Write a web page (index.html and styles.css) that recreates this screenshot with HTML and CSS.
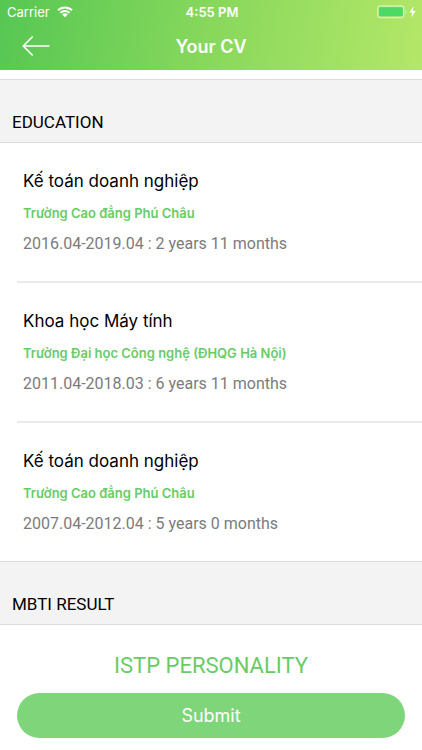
FILE: index.html
```html
<!DOCTYPE html>
<html lang="vi">
<head>
<meta charset="utf-8">
<meta name="viewport" content="width=device-width, initial-scale=1">
<title>Your CV</title>
<link rel="stylesheet" href="styles.css">
</head>
<body>
<header class="top">
  <div class="status">
    <div class="carrier">
      <span>Carrier</span>
      <svg class="wifi" viewBox="0 0 16 12" aria-hidden="true">
        <path d="M1 4.3a10 10 0 0 1 14 0M3.4 6.9a6.5 6.5 0 0 1 9.2 0" fill="none" stroke="currentColor" stroke-width="2"/>
        <path d="M8 11.3 5.2 8.6a4 4 0 0 1 5.6 0z" fill="currentColor"/>
      </svg>
    </div>
    <time class="clock">4:55 PM</time>
    <svg class="battery" viewBox="0 0 40 14" aria-hidden="true">
      <rect x=".75" y="1" width="26" height="11.5" rx="2.5" fill="none" stroke="#fff" stroke-opacity=".5" stroke-width="1.3"/>
      <rect x="2" y="2.3" width="23.8" height="9" rx="1.2" fill="#4cd964"/>
      <path d="M28.3 5v3.8q1.2-.6 1.2-1.9T28.3 5z" fill="#fff" fill-opacity=".5"/>
      <path d="M36.7 1.3 32.4 7.5h2.8l-1 4.8 4.6-6.4h-3z" fill="#fff"/>
    </svg>
  </div>
  <div class="nav">
    <button class="back" type="button" aria-label="Back">
      <svg viewBox="0 0 28 20" aria-hidden="true">
        <path d="M10.2 1 1.2 10l9 9M1.2 10h25.6" fill="none" stroke="currentColor" stroke-width="1.7" stroke-linecap="round" stroke-linejoin="round"/>
      </svg>
    </button>
    <h1 class="title">Your CV</h1>
  </div>
</header>
<main class="content">
  <h2 class="section">EDUCATION</h2>
  <ul class="list">
    <li class="entry">
      <h3 class="major">Kế toán doanh nghiệp</h3>
      <p class="school">Trường Cao đẳng Phú Châu</p>
      <p class="period">2016.04-2019.04 : 2 years 11 months</p>
    </li>
    <li class="entry">
      <h3 class="major">Khoa học Máy tính</h3>
      <p class="school">Trường Đại học Công nghệ (ĐHQG Hà Nội)</p>
      <p class="period">2011.04-2018.03 : 6 years 11 months</p>
    </li>
    <li class="entry">
      <h3 class="major">Kế toán doanh nghiệp</h3>
      <p class="school">Trường Cao đẳng Phú Châu</p>
      <p class="period">2007.04-2012.04 : 5 years 0 months</p>
    </li>
  </ul>
  <h2 class="section">MBTI RESULT</h2>
  <div class="result">
    <p class="personality">ISTP PERSONALITY</p>
    <button class="submit" type="button">Submit</button>
  </div>
</main>
</body>
</html>
```
FILE: styles.css
```css
* {
  box-sizing: border-box;
  margin: 0;
  padding: 0;
}

body {
  background: #fff;
  color: #000;
  font-family: Inter, "Liberation Sans", sans-serif;
}

button {
  border: 0;
  font: inherit;
}

.top {
  height: 70px;
  background: linear-gradient(100deg, #56c753, #88d85c 50%, #b4e768);
  color: #fff;
}

.status {
  display: grid;
  grid-template-columns: 1fr auto 1fr;
  align-items: center;
  height: 24px;
  padding: 0 5px 0 7px;
  font-size: 13px;
}

.carrier {
  display: flex;
  align-items: center;
  gap: 7px;
}

.wifi {
  width: 16px;
  height: 12px;
}

.clock {
  font-weight: 600;
}

.battery {
  width: 40px;
  height: 14px;
  justify-self: end;
}

.nav {
  display: grid;
  grid-template-columns: 1fr auto 1fr;
  align-items: center;
  height: 44px;
  padding: 0 16px;
}

.back {
  display: flex;
  justify-self: start;
  padding: 6px;
  background: none;
  color: #fff;
}

.back svg {
  width: 28px;
  height: 20px;
}

.title {
  font-size: 18px;
  font-weight: 600;
}

.content {
  padding-top: 9px;
}

.section,
.period,
.personality {
  font-family: Roboto, "Liberation Sans", sans-serif;
}

.section {
  height: 64px;
  padding: 30px 12px 0;
  border: solid #dddde1;
  border-width: 1px 0;
  background: #f3f3f3;
  font-size: 17px;
  font-weight: 400;
  line-height: 24px;
}

.list {
  list-style: none;
}

.entry {
  height: 140px;
  margin-left: 17px;
  padding: 26px 6px 0;
  border-bottom: 2px solid #ebebeb;
}

.entry:last-child {
  height: 138px;
  border-bottom: 0;
}

.major {
  font-size: 17px;
  font-weight: 400;
  line-height: 24px;
}

.school {
  margin-top: 10px;
  color: #68cc66;
  font-size: 13px;
  font-weight: 600;
  line-height: 20px;
}

.period {
  margin-top: 9px;
  color: #7b7b7b;
  font-size: 16px;
  line-height: 24px;
}

.result {
  padding: 25px 17px 12px;
}

.personality {
  color: #68cc66;
  font-size: 22px;
  line-height: 32px;
  text-align: center;
}

.submit {
  display: block;
  width: 100%;
  height: 45px;
  margin-top: 11px;
  border-radius: 23px;
  background: #7fd67a;
  color: #fff;
  font-size: 18px;
}
```
